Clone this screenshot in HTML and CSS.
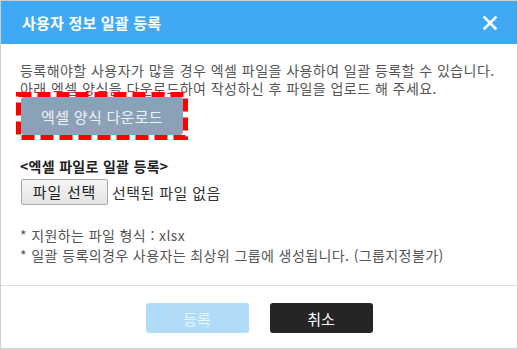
FILE: index.html
```html
<!DOCTYPE html>
<html lang="ko">
<head>
	<meta charset="UTF-8" />
	<title>사용자 정보 일괄 등록</title>
	<link rel="stylesheet" href="styles.css">
</head>
<body>
	<div class="pop">
		<div class="pop-head">
			<h2>사용자 정보 일괄 등록</h2>
			<span class="close">
				<svg width="14" height="14" viewBox="0 0 14 14"><path d="M1.5 1.5L12.5 12.5M12.5 1.5L1.5 12.5" stroke="#fff" stroke-width="2.6" stroke-linecap="square"/></svg>
			</span>
		</div>
		<div class="pop-body">
			<p class="desc">등록해야할 사용자가 많을 경우 엑셀 파일을 사용하여 일괄 등록할 수 있습니다.<br>아래 엑셀 양식을 다운로드하여 작성하신 후 파일을 업로드 해 주세요.</p>
			<div class="down-wrap">
				<button class="btn-down">엑셀 양식 다운로드</button>
				<!-- 빨간 점선 표시 -->
				<svg class="mark" width="172" height="48" viewBox="0 0 172 48"><rect x="2.5" y="2.5" width="167" height="43" fill="none" stroke="#ff0000" stroke-width="5" stroke-dasharray="13 6"/></svg>
			</div>
			<h3>&lt;엑셀 파일로 일괄 등록&gt;</h3>
			<div class="file-row">
				<span class="btn-file">파일 선택</span>
				<span class="file-name">선택된 파일 없음</span>
			</div>
			<ul class="notes">
				<li>* 지원하는 파일 형식 : xlsx</li>
				<li>* 일괄 등록의경우 사용자는 최상위 그룹에 생성됩니다. (그룹지정불가)</li>
			</ul>
		</div>
		<div class="pop-foot">
			<button class="btn-ok">등록</button>
			<button class="btn-cancel">취소</button>
		</div>
	</div>
</body>
</html>
```

FILE: styles.css
```css
*{margin: 0;padding: 0;box-sizing: border-box;}
body{font-family: "Noto Sans CJK KR", "Noto Sans", sans-serif;background: #fff;}
.pop{
	width: 518px;height: 349px;border: 1px solid #cfcfcf;
	display: flex;flex-direction: column;
}
.pop-head{
	height: 43px;background: #3fa9f5;
	display: flex;align-items: center;justify-content: space-between;
	padding: 0 20px 0 21px;
}
.pop-head h2{font-size: 15px;color: #fff;font-weight: bold;letter-spacing: 0.2px;}
.close{display: flex;}
.pop-body{padding: 17px 19px 0;flex: 1;}
.desc{font-size: 14px;letter-spacing: 0.45px;line-height: 18px;color: #555;}
.down-wrap{position: relative;width: 164px;margin-left: 1px;}
.btn-down{
	display: block;width: 162px;height: 38px;
	background: #8ba1b7;border: 0;border-radius: 3px;
	color: #eef2f6;font-size: 15px;font-family: inherit;letter-spacing: 0.3px;
}
.mark{position: absolute;left: -5px;top: -5px;}
.pop-body h3{font-size: 14px;font-weight: bold;color: #222;margin-top: 21px;line-height: 20px;letter-spacing: 0.3px;}
.file-row{display: flex;align-items: center;margin-top: 3px;}
.btn-file{
	width: 87px;height: 26px;border: 1px solid #a9a9a9;border-radius: 2px;
	background: linear-gradient(#f6f6f6, #e3e3e3);
	font-size: 15px;color: #222;text-align: center;line-height: 24px;letter-spacing: 0.8px;
	margin-left: 1px;
}
.file-name{font-size: 15px;color: #333;margin-left: 4px;letter-spacing: 0.4px;}
.notes{list-style: none;margin-top: 20px;}
.notes li{font-size: 14px;letter-spacing: 0.4px;line-height: 20px;color: #555;}
.pop-foot{
	height: 63px;border-top: 1px solid #ddd;
	display: flex;justify-content: center;gap: 21px;padding-top: 17px;
}
.pop-foot button{
	width: 103px;height: 30px;border: 0;border-radius: 3px;
	font-size: 15px;font-family: inherit;
}
.btn-ok{background: #b1dcf8;color: #eaf6fe;}
.btn-cancel{background: #252525;color: #fff;}
```
